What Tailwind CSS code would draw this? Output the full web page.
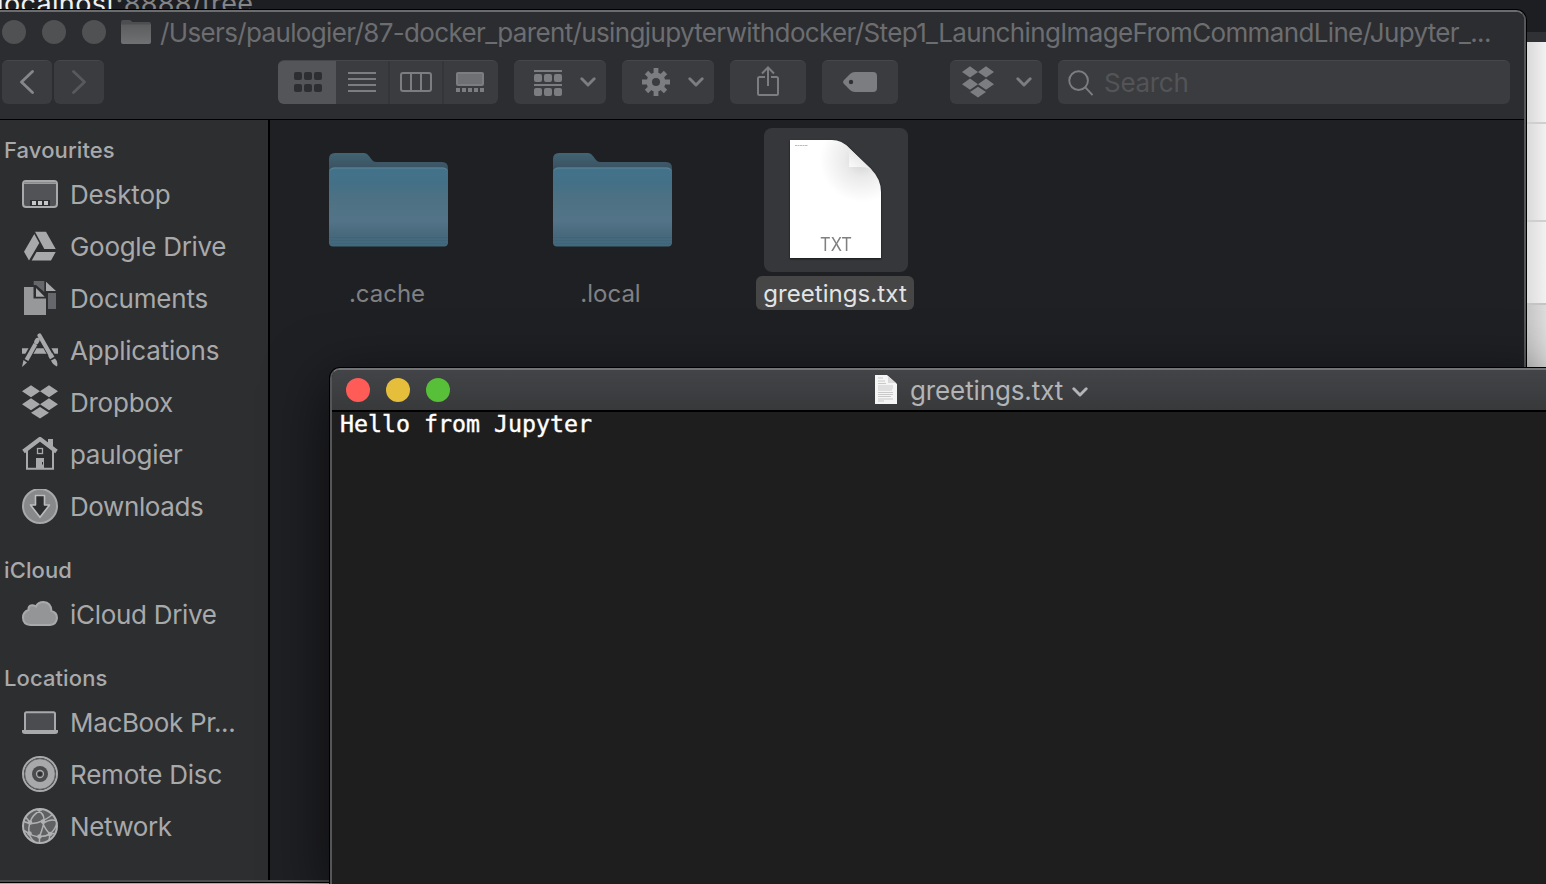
<!DOCTYPE html>
<html lang="en">
<head>
<meta charset="utf-8">
<title>Finder</title>
<script src="https://cdn.jsdelivr.net/npm/@tailwindcss/browser@4"></script>
</head>
<body class="relative h-[884px] w-[1546px] overflow-hidden bg-[#1d1e21] font-['Inter',sans-serif]">
<svg class="absolute size-0">
  <symbol id="dropbox" viewBox="0 0 36 34"><path d="M9 .3l9 6-9 6-9-6zM27 .3l9 6-9 6-9-6zM9 13.3l9 6-9 6-9-6zM27 13.3l9 6-9 6-9-6zM18 22l9 5.7-9 5.8-9-5.8z"/></symbol>
  <symbol id="chev" viewBox="0 0 16 10"><path d="M1.800 1.800L8 8l6.200-6.200" fill="none" stroke="currentColor" stroke-width="2.900" stroke-linecap="round" stroke-linejoin="round"/></symbol>
  <symbol id="folder" viewBox="0 0 119 94">
    <path d="M0 90V6Q0 0 6 0H35Q38 0 40 3L43 7Q44.500 9 47 9H113Q119 9 119 15V90z" fill="url(#fb)"/>
    <path d="M0 19Q0 14.500 5 14.500H114Q119 14.500 119 19V89Q119 93.500 115 93.500H4Q0 93.500 0 89z" fill="url(#ff)"/>
    <path d="M1 17.500Q2 15 5 15H114Q117 15 118 17.500" fill="none" stroke="#5f8296"/>
    <path d="M0 84.500H119M0 87.500H119M0 90.500H119" stroke="#3f657a" stroke-width="1"/>
  </symbol>
  <defs>
    <linearGradient id="fb" x1="0" y1="0" x2="0" y2="1"><stop offset="0" stop-color="#426473"/><stop offset=".17" stop-color="#3a5261"/></linearGradient>
    <linearGradient id="ff" x1="0" y1="0" x2="0" y2="1"><stop offset="0" stop-color="#42738b"/><stop offset=".2" stop-color="#437087"/><stop offset=".38" stop-color="#4d7183"/><stop offset=".68" stop-color="#537488"/><stop offset=".85" stop-color="#48697c"/><stop offset="1" stop-color="#41687d"/></linearGradient>
    <linearGradient id="gf" x1="0" y1="0" x2="0" y2="1"><stop offset="0" stop-color="#5c5d5f"/><stop offset="1" stop-color="#707173"/></linearGradient>
  </defs>
</svg>

<!-- Browser behind -->
<div class="absolute -left-[3px] -top-[12px] whitespace-nowrap text-[27px] leading-[32px] tracking-[0.35px] text-[#848587]"><span class="text-[#f0f0f0]">localhost</span>:8888/tree</div>
<div class="absolute right-0 top-0 flex h-full w-[40px] flex-col">
  <div class="h-8"></div>
  <div class="h-[10px] bg-[#303134]"></div>
  <div class="h-[82px] border-b-2 border-[#cfcfcf] bg-linear-to-r from-[#d8d8d8] from-50% to-[#f1f1f1]"></div>
  <div class="h-[98px] border-b-2 border-[#cfcfcf] bg-linear-to-r from-[#d8d8d8] from-50% to-[#f1f1f1]"></div>
  <div class="h-[83px] border-b-2 border-[#c4c4c4] bg-linear-to-r from-[#dcdcdc] from-50% to-[#f1f1f1]"></div>
  <div class="flex-1 bg-linear-to-r from-[#c4c4c4] from-50% to-[#dcdcdc]"></div>
</div>
<div class="absolute bottom-0 left-0 h-[2px] w-full bg-[#a9a9a9]"></div>

<!-- Finder window -->
<div class="absolute left-[-2px] top-[10px] flex h-[872px] w-[1528px] flex-col overflow-hidden rounded-tr-[10px] border-2 border-[#56575a] border-t-[#6b6c6e] border-b-[#4b4b4c] bg-[#1f2024] shadow-[0_0_0_1px_#000]">
  <header class="h-[108px] shrink-0 border-b border-black bg-[#2c2d30]">
    <div class="flex h-[42px] items-center gap-4 pl-[2px]">
      <i class="-mt-[2px] size-6 rounded-full bg-[#505153]"></i><i class="-mt-[2px] size-6 rounded-full bg-[#505153]"></i><i class="-mt-[2px] size-6 rounded-full bg-[#505153]"></i>
      <div class="-ml-px flex items-center gap-[9px]">
        <svg class="-mt-[2px] h-6 w-[30px]" viewBox="0 0 30 24"><path d="M0 22V2Q0 0 2 0H9L11.500 2H28Q30 2 30 4V22z" fill="#4d4e50"/><path d="M0 4.500H30V22Q30 24 28 24H2Q0 24 0 22z" fill="url(#gf)"/></svg>
        <span class="whitespace-nowrap text-[26px] leading-[30px] tracking-[-0.645px] text-[#6c6d70]">/Users/paulogier/87-docker_parent/usingjupyterwithdocker/Step1_LaunchingImageFromCommandLine/Jupyter_...</span>
      </div>
    </div>
    <div class="mt-[6px] flex h-11 pl-[2px] text-[#7c7d80]">
      <div class="flex w-[50px] items-center justify-center rounded-md border-t border-[#46474a] bg-[#3b3c3f] pb-px"><svg class="h-6 w-4 text-[#86878a]" viewBox="0 0 16 24"><path d="M13.500 1.500L2.500 12l11 10.500" fill="none" stroke="currentColor" stroke-width="2.800" stroke-linecap="round" stroke-linejoin="round"/></svg></div>
      <div class="ml-[2px] flex w-[50px] items-center justify-center rounded-md border-t border-[#46474a] bg-[#3b3c3f] pb-px"><svg class="h-6 w-4 text-[#58595c]" viewBox="0 0 16 24"><path d="M2.500 1.500L13.500 12l-11 10.500" fill="none" stroke="currentColor" stroke-width="2.800" stroke-linecap="round" stroke-linejoin="round"/></svg></div>
      <div class="ml-[174px] flex w-[220px] overflow-hidden rounded-md border-t border-[#46474a] bg-[#3b3c3f]">
        <div class="flex w-[58px] items-center justify-center bg-[#545558] pb-px pl-[2px] text-[#2d2e31]"><svg class="h-5 w-7" viewBox="0 0 28 20" fill="currentColor"><rect width="8" height="8" rx="2"/><rect x="10" width="8" height="8" rx="2"/><rect x="20" width="8" height="8" rx="2"/><rect y="12" width="8" height="8" rx="2"/><rect x="10" y="12" width="8" height="8" rx="2"/><rect x="20" y="12" width="8" height="8" rx="2"/></svg></div>
        <div class="flex w-[54px] items-center justify-center border-r-2 border-[#353639] pb-px"><svg class="h-5 w-7" viewBox="0 0 28 20"><path d="M0 1H28M0 7H28M0 13H28M0 19H28" stroke="currentColor" stroke-width="2"/></svg></div>
        <div class="flex w-[54px] items-center justify-center border-r-2 border-[#353639] pb-px"><svg class="h-5 w-8" viewBox="0 0 32 20"><path d="M1 3Q1 1 3 1H29Q31 1 31 3V17Q31 19 29 19H3Q1 19 1 17zM11 1V19M21 1V19" fill="none" stroke="currentColor" stroke-width="2"/></svg></div>
        <div class="flex w-[54px] items-center justify-center pb-px pr-[2px]"><svg class="h-5 w-7" viewBox="0 0 28 20"><rect x="1" y="1" width="26" height="12" rx="1" fill="#6f7073" stroke="currentColor" stroke-width="2"/><path d="M0 18H28" stroke="currentColor" stroke-width="4" stroke-dasharray="4 2"/></svg></div>
      </div>
      <div class="ml-4 flex w-[92px] items-center rounded-md border-t border-[#46474a] bg-[#3b3c3f] pb-px pl-5"><svg class="h-[26px] w-7 translate-y-px" viewBox="0 0 28 26" fill="currentColor"><path d="M0 0H28V2H0zM0 14H28V16H0z"/><rect y="4" width="8" height="8" rx="2"/><rect x="10" y="4" width="8" height="8" rx="2"/><rect x="20" y="4" width="8" height="8" rx="2"/><rect y="18" width="8" height="8" rx="2"/><rect x="10" y="18" width="8" height="8" rx="2"/><rect x="20" y="18" width="8" height="8" rx="2"/></svg><svg class="ml-[18px] h-[10px] w-4"><use href="#chev"/></svg></div>
      <div class="ml-4 flex w-[92px] items-center rounded-md border-t border-[#46474a] bg-[#3b3c3f] pb-px pl-5"><svg class="size-7" viewBox="-14 -14 28 28"><path d="M0-14V14M-14 0H14M-9.500-9.500L9.500 9.500M9.500-9.500L-9.500 9.500" stroke="currentColor" stroke-width="4.800"/><circle r="9.500" fill="currentColor"/><circle r="4" fill="#3b3c3f"/></svg><svg class="ml-[18px] h-[10px] w-4"><use href="#chev"/></svg></div>
      <div class="ml-4 flex w-[76px] items-center justify-center rounded-md border-t border-[#46474a] bg-[#3b3c3f] pb-px"><svg class="h-[30px] w-[22px] -translate-y-px" viewBox="0 0 22 30" fill="none" stroke="currentColor" stroke-width="2"><path d="M8 11H2.500Q1 11 1 12.500V27.500Q1 29 2.500 29H19.500Q21 29 21 27.500V12.500Q21 11 19.500 11H14M11 20V1.500M5 7.500L11 1.500L17 7.500"/></svg></div>
      <div class="ml-4 flex w-[76px] items-center justify-center rounded-md border-t border-[#46474a] bg-[#3b3c3f] pb-px"><svg class="h-5 w-[34px]" viewBox="0 0 34 20"><path d="M.6 8.500L7 2Q9 0 12 0H30Q34 0 34 4V16Q34 20 30 20H12Q9 20 7 18L.6 11.500Q-.4 10 .6 8.500z" fill="currentColor"/><circle cx="8" cy="10" r="2.200" fill="#303134"/></svg></div>
      <div class="ml-[52px] flex w-[92px] items-center rounded-md border-t border-[#46474a] bg-[#3b3c3f] pb-[2px] pl-3"><svg class="h-8 w-8" viewBox="0 0 36 34" preserveAspectRatio="none" fill="currentColor"><use href="#dropbox" width="36" height="34"/></svg><svg class="ml-[22px] h-[10px] w-4"><use href="#chev"/></svg></div>
      <div class="ml-4 flex w-[452px] items-center gap-[10px] rounded-md border-t border-[#46474a] bg-[#3b3c3f] pl-[10px]"><svg class="size-[26px]" viewBox="0 0 27 27" fill="none" stroke="currentColor" stroke-width="2"><circle cx="11" cy="11" r="9.700"/><path d="M18 18l7.500 8"/></svg><span class="text-[26px] leading-[30px] tracking-[-0.3px] text-[#535457]">Search</span></div>
    </div>
  </header>
  <div class="flex min-h-0 flex-1">
    <aside class="w-[270px] shrink-0 border-r-2 border-black bg-[#2d2e30] pt-[11px] text-[26px] leading-[30px] text-[#a8a9ab]">
      <h2 class="flex h-[38px] items-center pl-[4px] text-[22px] font-medium tracking-[0.1px]">Favourites</h2>
      <ul>
        <li class="flex h-[52px] items-center gap-3 pl-[22px]"><svg class="size-9" viewBox="0 0 36 36"><rect x="1" y="4" width="34" height="26" rx="3" fill="#525356" stroke="currentColor" stroke-width="2"/><path d="M1 5.500H35" stroke="currentColor" stroke-width="3"/><path d="M2 5.800H34" stroke="#808183" stroke-width="1"/><path d="M8 23H28V29H8z" fill="#2d2e30"/><path d="M10 24h4v4h-4zM16 24h4v4h-4zM22 24h4v4h-4z" fill="#c4c5c6"/></svg><span class="tracking-[-0.15px]">Desktop</span></li>
        <li class="flex h-[52px] items-center gap-3 pl-[22px]"><svg class="size-9" viewBox="0 0 36 36" fill="currentColor"><path d="M13 2.700H24L33.700 20H22.300zM12.300 5L17.300 14 7 31.500 2 22.700zM14.500 23H33.700L29 31.500H9.700z"/></svg><span class="tracking-[-0.3px]">Google Drive</span></li>
        <li class="flex h-[52px] items-center gap-3 pl-[22px]"><svg class="size-9" viewBox="0 0 36 36"><path d="M11.700 0H22.300V11L14 4H11.700zM26 12H34V28H26z" fill="#66676a"/><path d="M24 .7V10H34z" fill="#a8a9ab"/><path d="M2 6H11.500V17.500H24V34H2z" fill="#97989a"/><path d="M14 7V15.700H22.700z" fill="#a8a9ab"/></svg><span class="tracking-[-0.2px]">Documents</span></li>
        <li class="flex h-[52px] items-center gap-3 pl-[22px]"><svg class="size-9" viewBox="0 0 36 36" fill="none" stroke="currentColor"><path d="M0 18H36" stroke-width="5.500"/><path d="M18 10l-8.500 15.500h17z" fill="#2d2e30" stroke="none"/><path d="M9 18H27" stroke-width="5.500"/><path d="M18.500 2.500L33.500 30M14.500 8L3.500 28" stroke="#2d2e30" stroke-width="7"/><path d="M17.500 2.500L28 21" stroke-width="4.200" stroke-linecap="round"/><path d="M28.200 21.500L30.200 25" stroke-width="5"/><path d="M29 27.500L33 25.500Q36.500 29 35 33.500Q31 32 29 27.500z" fill="currentColor" stroke="none"/><path d="M15.500 7L14.300 9" stroke-width="4.500" stroke-linecap="round"/><path d="M13.500 11L4.500 27" stroke-width="4.200"/><path d="M1.500 27L5 29.500 0 34z" fill="currentColor" stroke="none"/></svg><span class="tracking-[-0.2px]">Applications</span></li>
        <li class="flex h-[52px] items-center gap-3 pb-[2px] pl-[22px]"><svg class="h-[34px] w-9" fill="currentColor"><use href="#dropbox"/></svg><span class="pt-[2px] tracking-[-0.25px]">Dropbox</span></li>
        <li class="flex h-[52px] items-center gap-3 pl-[22px]"><svg class="size-9" viewBox="0 0 36 36" fill="none" stroke="currentColor"><path d="M26 2h5v9l-5-4z" fill="currentColor" stroke="none"/><path d="M1.500 14.500L18 2 34.500 14.500" stroke-width="4.200"/><path d="M5 13V31.700H31V13" stroke-width="2"/><rect x="15.500" y="11.500" width="5" height="5" stroke-width="1.300"/><path d="M14 21h8v11h-8z" fill="currentColor" stroke="none"/><path d="M20.500 25v2.500" stroke="#2d2e30"/></svg><span class="tracking-[-0.3px]">paulogier</span></li>
        <li class="flex h-[52px] items-center gap-3 pl-[22px]"><svg class="size-9" viewBox="0 1 36 36"><circle cx="18" cy="18" r="17" fill="#88898b" stroke="currentColor" stroke-width="2"/><path d="M13.500 7.500H22.500V17H27.500L18 29.300 8.500 17H13.500z" fill="#2d2e30" stroke="#bcbdbe" stroke-width="1.600" stroke-linejoin="round"/></svg><span class="tracking-[-0.4px]">Downloads</span></li>
      </ul>
      <h2 class="mt-[18px] flex h-[38px] items-center pl-[4px] text-[22px] font-medium tracking-[0.1px]">iCloud</h2>
      <ul>
        <li class="flex h-[52px] items-center gap-3 pl-[22px]"><svg class="size-9" viewBox="0 0 36 36"><path d="M8.500 28Q1 27.500 1 20.500Q1 15 6.500 13Q6 8.500 10 8.200Q12.500 8 14 9.500Q16 5 21.500 5Q29 5.500 29.500 14Q35 15.500 35 21Q34.500 27.500 28 28z" fill="#949597" stroke="currentColor" stroke-width="2"/></svg><span class="tracking-[-0.3px]">iCloud Drive</span></li>
      </ul>
      <h2 class="mt-[18px] flex h-[38px] items-center pl-[4px] text-[22px] font-medium tracking-[0.1px]">Locations</h2>
      <ul>
        <li class="flex h-[52px] items-center gap-3 pl-[22px]"><svg class="size-9" viewBox="0 0 36 36"><rect x="3" y="7.300" width="30" height="19" rx="1.500" fill="#4b4c4f" stroke="currentColor" stroke-width="2"/><path d="M0 25H36V26.500Q36 29 33 29H3Q0 29 0 26.500z" fill="currentColor"/></svg><span class="tracking-[-0.35px]">MacBook Pr...</span></li>
        <li class="flex h-[52px] items-center gap-3 pl-[22px]"><svg class="size-9 overflow-visible" viewBox="0 .5 36 36" fill="none" stroke="currentColor"><circle cx="18" cy="17.500" r="17" stroke-width="2"/><circle cx="18" cy="17.500" r="15.300" fill="currentColor" stroke="#68696b"/><circle cx="18" cy="17.500" r="8" fill="#4a4b4d" stroke="none"/><circle cx="18" cy="17.500" r="3.500" stroke-width="1.300"/><circle cx="18" cy="17.500" r="2" fill="#2d2e30" stroke="none"/></svg><span class="tracking-[-0.2px]">Remote Disc</span></li>
        <li class="flex h-[52px] items-center gap-3 pl-[22px]"><svg class="size-9 overflow-visible" viewBox="0 .5 36 36" fill="none" stroke="#b0b1b3" stroke-width="1.500"><circle cx="18" cy="17.500" r="17" fill="#606163" stroke-width="2"/><path d="M1.500 13Q11 17 20 12.500Q29 8 30 6M4 9L8 14Q6 20 7 25Q9 31 13 33.500M8 14Q10 6 20 1M15 1Q22 5 22 11T17.500 28V34M20 12.500Q23 21 28 25.500L32 25M7 25Q13 29 18 28Q24 28 28 25.500Q34 20 35 14M21 15Q28 10 34 12M2 22L7 25M28 25.500L27 32"/><g fill="#b0b1b3" stroke="none"><circle cx="8" cy="14" r="2.300"/><circle cx="21" cy="13" r="2.300"/><circle cx="7.500" cy="25" r="2.300"/><circle cx="17.500" cy="28" r="2.300"/><circle cx="28" cy="25.500" r="2.300"/></g></svg><span class="tracking-[-0.4px]">Network</span></li>
      </ul>
    </aside>
    <main class="flex flex-1 items-start bg-[#1f2024] pl-[6px] pt-2 text-[24px] leading-[30px]">
      <div class="flex w-56 flex-col items-center"><div class="flex h-36 items-center justify-center"><svg class="h-[94px] w-[119px]"><use href="#folder"/></svg></div><span class="mr-[2px] mt-1 h-[34px] pt-[3px] text-[#808183]">.cache</span></div>
      <div class="flex w-56 flex-col items-center"><div class="flex h-36 items-center justify-center"><svg class="h-[94px] w-[119px]"><use href="#folder"/></svg></div><span class="mr-[3px] mt-1 h-[34px] pt-[3px] text-[#808183]">.local</span></div>
      <div class="flex w-56 flex-col items-center"><div class="flex size-36 items-center justify-center rounded-lg bg-[#36373a] pb-[2px] pr-px">
        <svg class="h-[118px] w-[91px] overflow-visible drop-shadow-[0_1px_1px_#0009]" viewBox="0 0 91 118">
          <defs><radialGradient id="pg" gradientUnits="userSpaceOnUse" cx="72" cy="20" r="42"><stop offset="0" stop-color="#cfd0d0"/><stop offset=".4" stop-color="#eaeaea"/><stop offset="1" stop-color="#fff"/></radialGradient>
          <linearGradient id="cg" x1="0" y1="1" x2=".6" y2=".3"><stop offset="0" stop-color="#fff"/><stop offset="1" stop-color="#e4e4e4"/></linearGradient></defs>
          <path d="M0 0H42Q52 0 59 8L81 29Q91 39 91 52V118H0z" fill="url(#pg)"/><path d="M56 5Q59 9 59 15V27H70Q78 27 82 30z" fill="url(#cg)"/>
          <path d="M5 5.500H18" stroke="#bbb" stroke-width="1" stroke-dasharray="2 .5"/>
          <text x="46" y="111" text-anchor="middle" textLength="32" lengthAdjust="spacingAndGlyphs" font-size="18" fill="#808080" font-family="Inter">TXT</text></svg>
      </div><span class="mr-[2px] mt-1 h-[34px] rounded-md bg-[#464646] px-[7px] pt-[3px] tracking-[0.07px] text-[#e3e3e3]">greetings.txt</span></div>
    </main>
  </div>
</div>

<!-- Editor window -->
<div class="absolute left-[330px] top-[368px] flex h-[516px] w-[1216px] flex-col overflow-hidden rounded-tl-[10px] border-l-2 border-t-2 border-[#555658] border-t-[#737476] bg-[#1e1e1e] shadow-[0_0_0_1px_#000,0_16px_60px_4px_#0009]">
  <header class="flex h-[42px] shrink-0 items-center border-b-2 border-black bg-linear-to-b from-[#434447] to-[#38393b] pl-[14px]">
    <div class="flex gap-4"><i class="size-6 rounded-full bg-[#ff5c58]"></i><i class="size-6 rounded-full bg-[#e5bf3c]"></i><i class="size-6 rounded-full bg-[#57c038]"></i></div>
    <svg class="ml-[425px] h-[29px] w-[22px] -translate-y-px" viewBox="0 0 22 29"><path d="M0 0H12L22 9V29H0z" fill="#f5f5f5"/><path d="M13 1V8H21z" fill="#dadada"/><path d="M3 3h5M3 6h7M3 8.500h8M3 11h15M3 13h15M3 15h14M3 17.500h15M3 19.500h15M3 21.500h13M3 24h15M3 26h6" stroke="#c9c9c9" stroke-width="1"/></svg>
    <span class="ml-[13px] pt-[2px] text-[26px] leading-[30px] tracking-[-0.12px] text-[#b3b4b6]">greetings.txt</span>
    <svg class="ml-[9px] h-[10px] w-4 translate-y-[2px] text-[#b3b4b6]"><use href="#chev"/></svg>
  </header>
  <pre class="pl-[8px] font-['DejaVu_Sans_Mono',monospace] text-[23.25px] leading-[24px] text-white [-webkit-text-stroke:0.4px_white]">Hello from Jupyter</pre>
</div>
</body>
</html>
